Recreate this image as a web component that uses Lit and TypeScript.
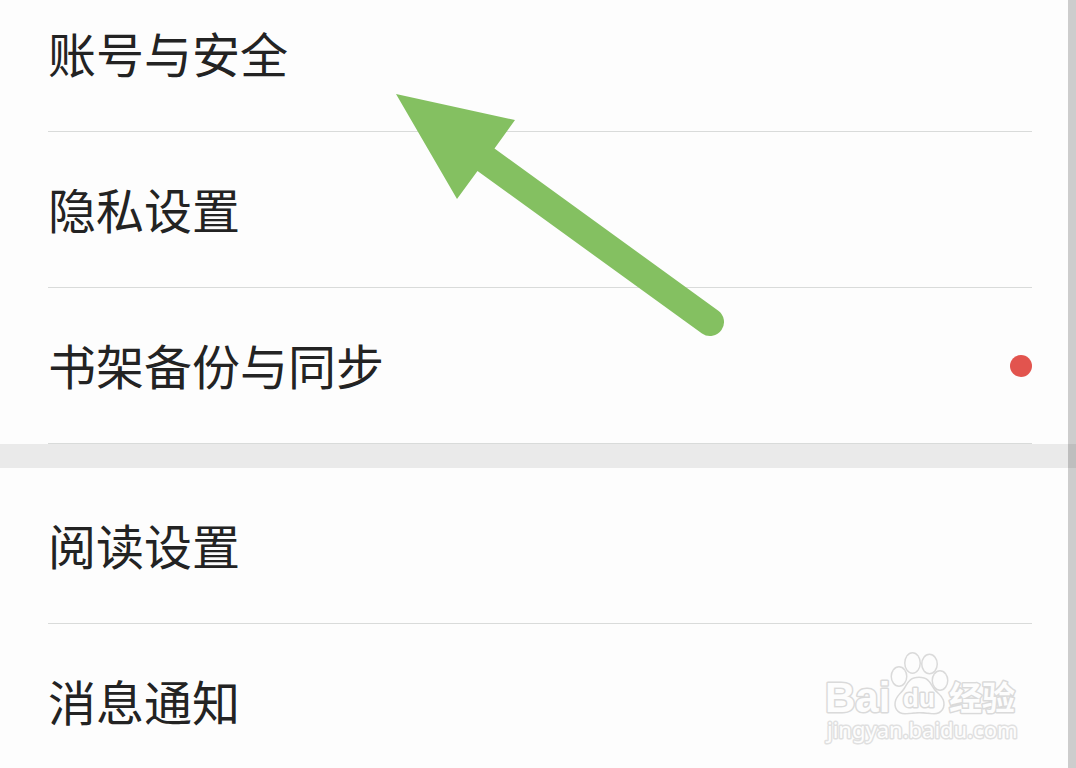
import { LitElement, html, css } from "lit";
import { customElement, property } from "lit/decorators.js";

interface SettingsItem {
  label: string;
  badge?: boolean;
}

const GROUPS: SettingsItem[][] = [
  [{ label: "账号与安全" }, { label: "隐私设置" }, { label: "书架备份与同步", badge: true }],
  [{ label: "阅读设置" }, { label: "消息通知" }],
];

@customElement("settings-row")
class SettingsRow extends LitElement {
  @property() label = "";
  @property({ type: Boolean }) badge = false;

  static styles = css`
    :host {
      display: block;
    }
    .row {
      display: flex;
      align-items: center;
      justify-content: space-between;
      box-sizing: border-box;
      width: 100%;
      margin: 0;
      padding: 42px 0 41px;
      border: 0;
      border-bottom: 1px solid #d9dbda;
      background: none;
      color: #232323;
      font: inherit;
      font-size: 48px;
      line-height: 68px;
      text-align: left;
    }
    .label {
      padding-bottom: 4px;
    }
    .dot {
      width: 22px;
      height: 22px;
      border-radius: 50%;
      background: #e2544e;
    }
  `;

  render() {
    return html`
      <button class="row" type="button">
        <span class="label">${this.label}</span>
        ${this.badge ? html`<span class="dot"></span>` : null}
      </button>
    `;
  }
}

@customElement("app-root")
class AppRoot extends LitElement {
  static styles = css`
    :host {
      display: block;
      position: relative;
      height: 100vh;
      overflow: hidden;
      background: #fdfdfd;
      font-family: "Noto Sans CJK SC", sans-serif;
    }
    .page {
      display: grid;
      grid-template-columns: 1fr 8px;
      height: 100%;
    }
    .list {
      grid-area: 1 / 1 / 2 / 3;
      display: flex;
      flex-direction: column;
      gap: 24px;
      margin-top: -24px;
      background: #eaeaea;
    }
    .group {
      padding: 0 44px 0 48px;
      background: #fdfdfd;
    }
    .edge {
      grid-area: 1 / 2 / 2 / 3;
      background: rgba(0, 0, 0, 0.19);
    }
    .arrow {
      position: absolute;
      left: 396px;
      top: 94px;
      pointer-events: none;
    }
    .watermark {
      position: absolute;
      right: 52px;
      bottom: 20px;
      pointer-events: none;
    }
    .ink {
      fill: #fdfdfd;
      stroke: #dadada;
      stroke-width: 3px;
      stroke-linejoin: round;
      paint-order: stroke;
    }
    .latin {
      font-family: "Liberation Sans", sans-serif;
      font-weight: 700;
      font-size: 42px;
    }
    .du {
      font-family: "Liberation Sans", sans-serif;
      font-weight: 700;
      font-size: 26px;
    }
    .cjk {
      font-weight: 700;
      font-size: 33px;
    }
    .site {
      font-family: "Noto Sans", sans-serif;
      font-weight: 400;
      font-size: 22px;
      stroke: #e0e0e0;
    }
  `;

  render() {
    return html`
      <div class="page">
        <main class="list">
          ${GROUPS.map(
            (group) => html`
              <section class="group">
                ${group.map(
                  (item) => html`<settings-row .label=${item.label} .badge=${item.badge ?? false}></settings-row>`
                )}
              </section>
            `
          )}
        </main>
        <div class="edge"></div>
      </div>
      <svg class="arrow" width="330" height="244" viewBox="0 0 330 244" aria-hidden="true">
        <path
          d="M0 0L119 26L98.500 54.500L322 216.500A14 14 0 0 1 306 239.500L81.500 77L61 105Z"
          fill="#84c061"
        />
      </svg>
      <svg class="watermark" width="204" height="100" viewBox="820 648 204 100" role="img" aria-label="Baidu">
        <text class="ink latin" x="825" y="712">Bai</text>
        <ellipse class="ink" cx="899" cy="676.500" rx="7" ry="9" />
        <ellipse class="ink" cx="912.500" cy="663" rx="7" ry="9.500" />
        <ellipse class="ink" cx="929.500" cy="664" rx="7" ry="9" />
        <ellipse class="ink" cx="940" cy="680.500" rx="7" ry="9" />
        <path
          class="ink"
          d="M919 678C927 678 929 682 932 687C935 693 940 694 942.500 700C945 707 941 713 934 713C928 713 926 712 919.500 712C913 712 911 713 905 713C898 713 894 707 896.500 700C899 694 903 693 906 687C909 682 911 678 919 678Z"
        />
        <text class="ink du" x="903" y="707">du</text>
        <text class="ink cjk" x="949" y="710">经验</text>
        <text class="ink site" x="827" y="738">jingyan.baidu.com</text>
      </svg>
    `;
  }
}
